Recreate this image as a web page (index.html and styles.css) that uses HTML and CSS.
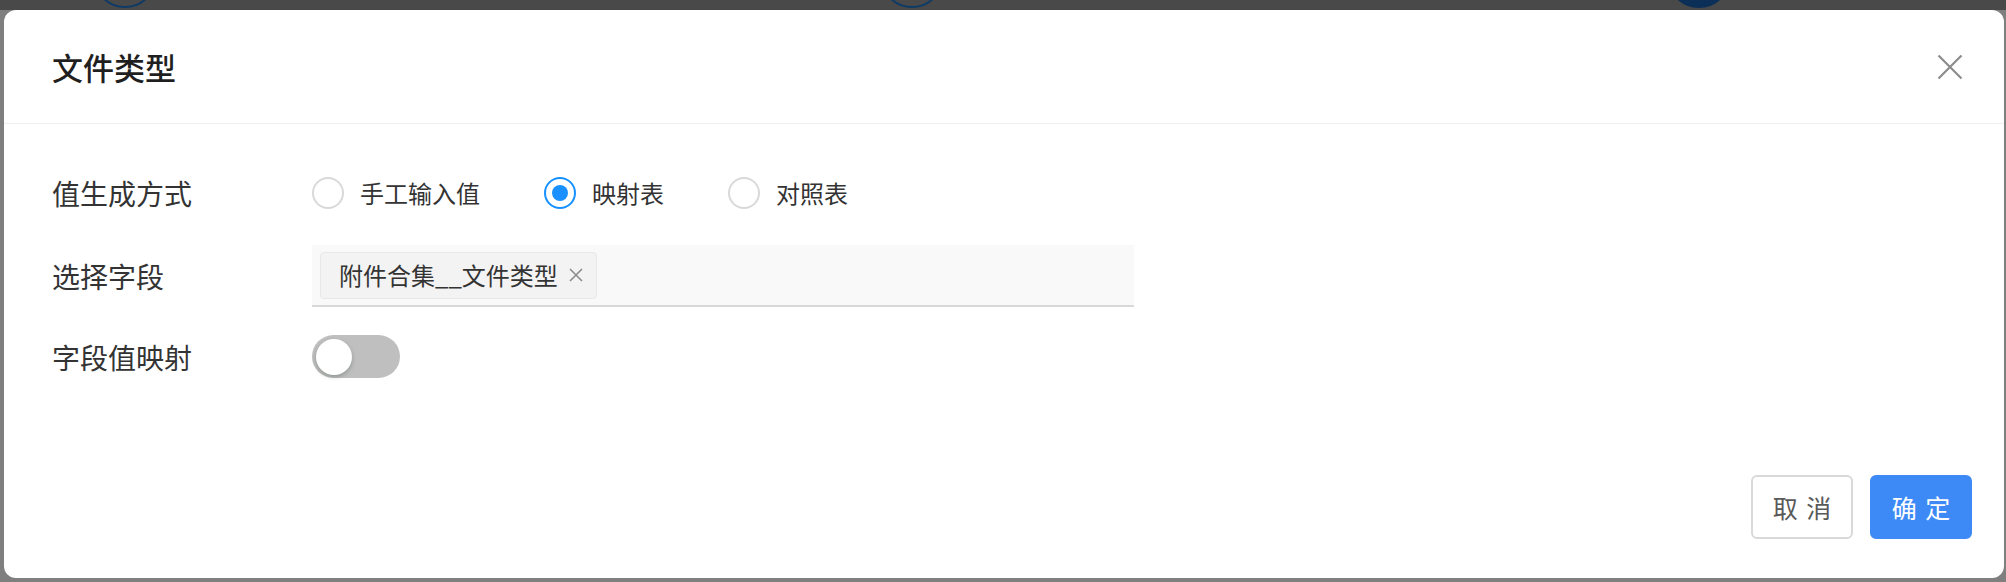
FILE: index.html
```html
<!DOCTYPE html>
<html lang="zh-CN">
<head>
<meta charset="utf-8">
<title>文件类型</title>
<link rel="stylesheet" href="styles.css">
</head>
<body>
<div class="top-band">
  <span class="bg-ring ring-a"></span>
  <span class="bg-ring ring-b"></span>
  <span class="bg-ring ring-c"></span>
</div>
<div class="stage">
  <div class="modal">
    <div class="modal-header">
      <h2 class="modal-title">文件类型</h2>
      <button class="modal-close" type="button" aria-label="关闭">
        <svg width="26" height="26" viewBox="0 0 26 26"><path d="M1.5 1.5 L24.5 24.5 M24.5 1.5 L1.5 24.5" stroke="#8c8c8c" stroke-width="2.2" fill="none"/></svg>
      </button>
    </div>
    <div class="modal-body">
      <div class="form-row row-radio">
        <div class="form-label">值生成方式</div>
        <div class="radio-group">
          <label class="radio"><span class="radio-dot"></span><span class="radio-text">手工输入值</span></label>
          <label class="radio is-checked"><span class="radio-dot"></span><span class="radio-text">映射表</span></label>
          <label class="radio"><span class="radio-dot"></span><span class="radio-text">对照表</span></label>
        </div>
      </div>
      <div class="form-row row-select">
        <div class="form-label">选择字段</div>
        <div class="select">
          <span class="tag"><span class="tag-text">附件合集__文件类型</span>
            <svg class="tag-close" width="16" height="16" viewBox="0 0 16 16"><path d="M2 2 L14 14 M14 2 L2 14" stroke="#8c8c8c" stroke-width="1.6" fill="none"/></svg>
          </span>
        </div>
      </div>
      <div class="form-row row-switch">
        <div class="form-label">字段值映射</div>
        <div class="switch"><span class="switch-knob"></span></div>
      </div>
    </div>
    <div class="modal-footer">
      <button class="btn" type="button"><span>取消</span></button>
      <button class="btn btn-primary" type="button"><span>确定</span></button>
    </div>
  </div>
</div>
</body>
</html>
```
FILE: styles.css
```css
html, body {
  margin: 0;
  padding: 0;
  height: 582px;
  overflow: hidden;
  background: #7f7f7f;
  font-family: "Noto Sans CJK SC", "Noto Sans", sans-serif;
}

.top-band {
  position: relative;
  height: 10px;
  background: #494949;
  overflow: hidden;
}

.bg-ring {
  position: absolute;
  top: -56px;
  width: 64px;
  height: 64px;
  box-sizing: border-box;
  border-radius: 50%;
  border: 2px solid #0f3a66;
}
.ring-a { left: 93px; }
.ring-b { left: 880px; }
.ring-c { left: 1667px; background: #0b2f57; border-color: #0b2f57; }

.stage {
  padding: 0 2px 4px 4px;
}

.modal {
  width: 2000px;
  height: 568px;
  background: #fff;
  border-radius: 12px;
  display: flex;
  flex-direction: column;
}

.modal-header {
  height: 114px;
  box-sizing: border-box;
  border-bottom: 1px solid #efefef;
  display: flex;
  align-items: center;
  justify-content: space-between;
  padding: 0 41px 0 48px;
}

.modal-title {
  margin: 0;
  font-size: 31px;
  font-weight: 500;
  line-height: 1;
  color: #1f1f1f;
}

.modal-close {
  width: 26px;
  height: 26px;
  padding: 0;
  border: 0;
  background: none;
  display: flex;
}

.modal-body {
  padding: 37px 48px 0;
}

.form-row {
  display: flex;
  align-items: center;
}

.form-label {
  width: 260px;
  flex: none;
  font-size: 28px;
  line-height: 1;
  color: #333;
}

.row-radio { height: 64px; }
.row-select { height: 62px; margin-top: 20px; }
.row-switch { height: 43px; margin-top: 28px; }

.radio-group {
  display: flex;
  align-items: center;
}

.radio {
  display: flex;
  align-items: center;
  margin-right: 64px;
  font-size: 24px;
  line-height: 1;
  color: #333;
}

.radio-dot {
  width: 32px;
  height: 32px;
  box-sizing: border-box;
  border: 2px solid #d9d9d9;
  border-radius: 50%;
  margin-right: 16px;
  display: flex;
  align-items: center;
  justify-content: center;
}

.radio.is-checked .radio-dot {
  border-color: #1890ff;
}

.radio.is-checked .radio-dot::after {
  content: "";
  width: 16px;
  height: 16px;
  border-radius: 50%;
  background: #1890ff;
}

.select {
  width: 822px;
  height: 62px;
  box-sizing: border-box;
  background: #f9f9f9;
  border-bottom: 2px solid #d9d9d9;
  display: flex;
  align-items: center;
  padding-left: 8px;
}

.tag {
  height: 47px;
  box-sizing: border-box;
  display: flex;
  align-items: center;
  gap: 10px;
  padding: 0 12px 0 18px;
  background: #f3f3f3;
  border: 1px solid #e8e8e8;
  border-radius: 4px;
  font-size: 24px;
  line-height: 1;
  color: #333;
}

.tag-close { flex: none; }

.switch {
  width: 88px;
  height: 43px;
  box-sizing: border-box;
  border-radius: 22px;
  background: #bfbfbf;
  padding: 0 4px;
  display: flex;
  align-items: center;
}

.switch-knob {
  width: 36px;
  height: 36px;
  border-radius: 50%;
  background: #fff;
  box-shadow: 0 2px 4px rgba(0, 35, 11, 0.25);
}

.modal-footer {
  margin-top: auto;
  display: flex;
  justify-content: flex-end;
  gap: 17px;
  padding: 0 32px 39px;
}

.btn {
  width: 102px;
  height: 64px;
  box-sizing: border-box;
  border-radius: 6px;
  border: 2px solid #d9d9d9;
  background: #fff;
  color: #595959;
  font-family: inherit;
  font-size: 25px;
  line-height: 1;
  padding: 0;
  letter-spacing: 0.34em;
}

.btn span {
  margin-right: -0.34em;
}

.btn-primary {
  background: #3d8af7;
  border-color: #3d8af7;
  color: #fff;
}
```
